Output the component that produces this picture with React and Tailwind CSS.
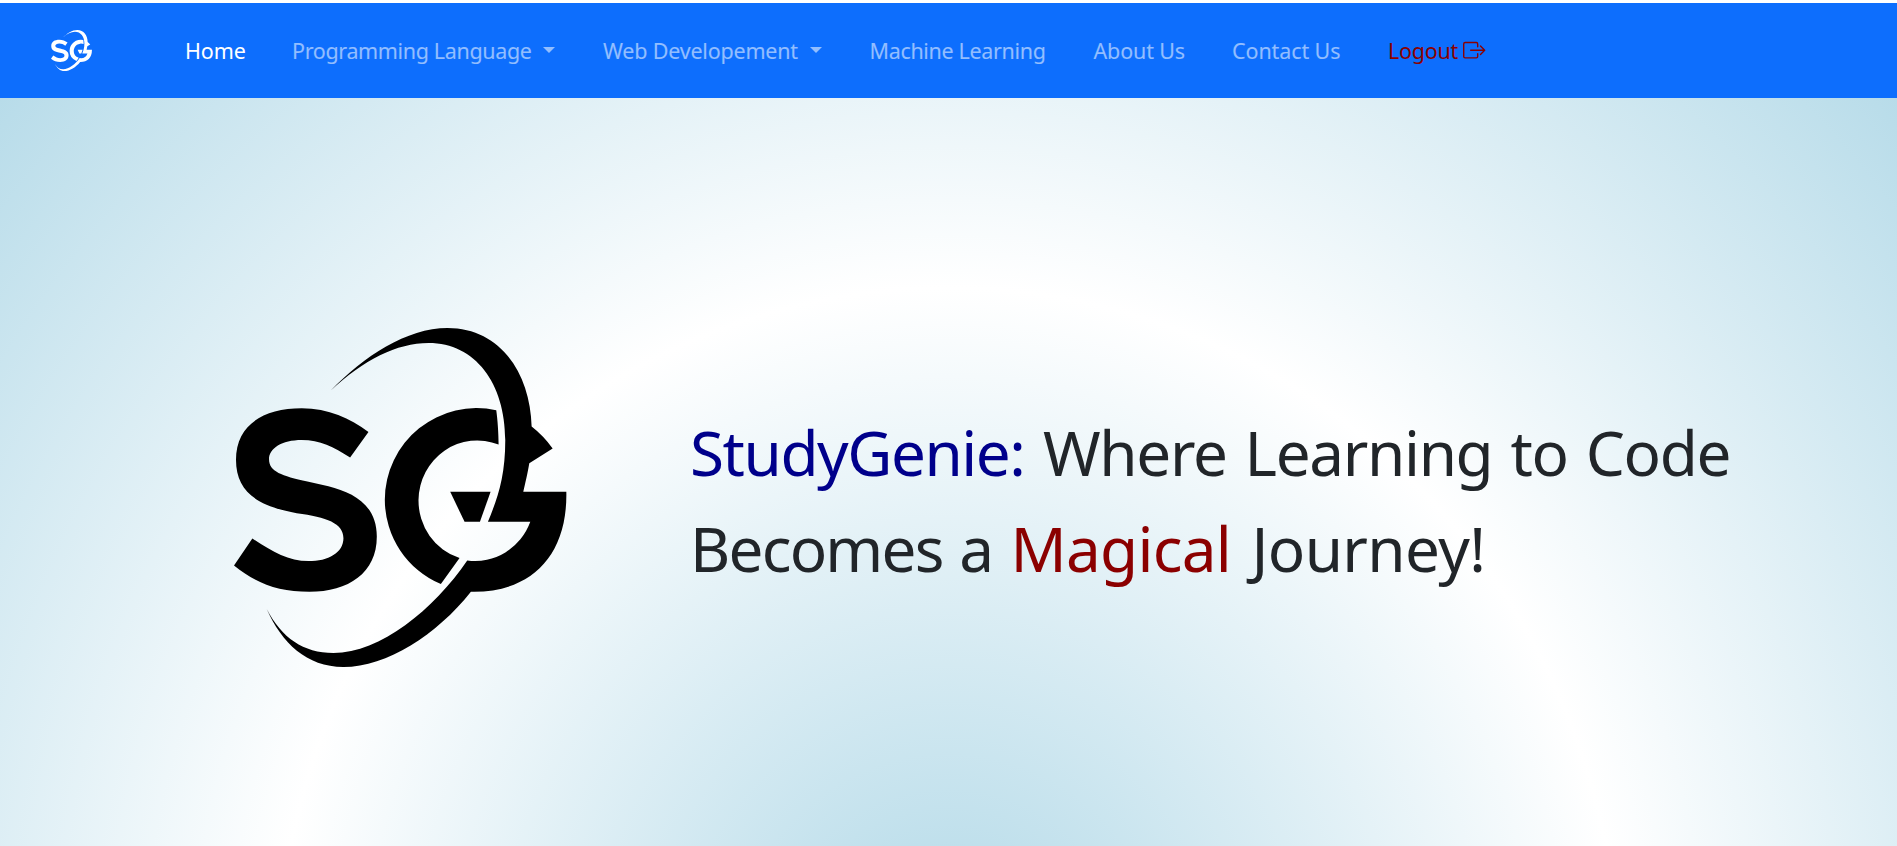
import { BsBoxArrowRight } from "react-icons/bs";

function Logo({ className }) {
  return (
    <svg viewBox="42 54 998 1018" preserveAspectRatio="none" className={className} fill="currentColor" role="img" aria-label="StudyGenie">
      <path d="M445 366C390 325 325 295 245 295C130 295 48 345 48 450C48 545 110 588 230 610C320 622 370 640 370 685C370 728 325 754 265 754C205 754 155 725 97 686L42 767C110 822 175 846 268 846C385 846 470 790 470 680C470 585 400 548 325 529L262 515C185 498 147 485 147 448C147 415 185 390 245 390C300 390 340 410 390 443Z" />
      <path d="M828 301A275 275.5 0 0 0 494 570A275 275.5 0 0 0 662 823L718 745A176 181 0 0 1 595 570A176 181 0 0 1 835 404C835 370 832 330 828 301Z" />
      <path d="M690 546H811L779 636H733Z" />
      <path d="M332 242C430 140 560 54 682 54C840 54 930 190 934 350Q970 378 997 416L927 460C921 495 915 520 909 546H1038C1042 745 925 850 752 846C650 975 500 1072 370 1072C260 1072 185 1000 140 898C185 985 250 1030 340 1030C480 1030 640 900 741 752A176 181 0 0 0 930 636H803C832 565 855 500 855 390C855 220 765 99 625 99C530 99 430 150 332 242Z" />
    </svg>
  );
}

function Caret() {
  return <span className="mb-[2px] ml-auto h-0 w-0 border-x-[6px] border-t-[6px] border-x-transparent border-t-current" />;
}

const links = [
  { label: "Home", box: "w-[107px] tracking-[-0.1px] text-white" },
  { label: "Programming Language", box: "w-[311px] pr-[48px] tracking-[-0.35px]", menu: true },
  { label: "Web Developement", box: "w-[266.5px] pr-[47.5px] tracking-[-0.2px]", menu: true },
  { label: "Machine Learning", box: "w-[224px] tracking-[-0.33px]" },
  { label: "About Us", box: "w-[138.5px] tracking-[-0.15px]" },
  { label: "Contact Us", box: "w-[156px] tracking-[-0.1px]" },
];

export default function App() {
  return (
    <div className="flex h-[846px] flex-col overflow-hidden bg-white pt-[3px] font-['Noto_Sans',sans-serif]">
      <nav className="flex h-[95px] shrink-0 items-center bg-[#0d6efd] pl-[51px] text-[21.5px] leading-[34px] whitespace-nowrap">
        <a href="#" className="mr-[93px] text-white">
          <Logo className="h-[41px] w-[41px]" />
        </a>
        <ul className="flex items-center text-white/55">
          {links.map(({ label, box, menu }) => (
            <li key={label} className={box}>
              <a href="#" className="flex items-center">
                {label}
                {menu && <Caret />}
              </a>
            </li>
          ))}
          <li>
            <a href="#" className="flex items-center tracking-[-0.24px] text-[#8b0000]">
              Logout
              <BsBoxArrowRight className="mb-px ml-[5px] h-[22.4px] w-[22.4px]" />
            </a>
          </li>
        </ul>
      </nav>
      <main className="flex grow items-start bg-[radial-gradient(1341px_1390px_at_948.5px_885px,#b0d8e7,#ffffff_50%,#b0d8e7)] pl-[234px]">
        <Logo className="mt-[230px] h-[339px] w-[333px] shrink-0 text-black" />
        <h1 className="mt-[306px] ml-[123px] text-[62px] leading-[96px] font-normal whitespace-nowrap text-[#212529]">
          <span className="flex">
            <span className="w-[353px] tracking-[-1.45px] text-[#00008b]">StudyGenie: </span>
            <span className="tracking-[-1.35px] [word-spacing:3.3px]">Where Learning to Code</span>
          </span>
          <span className="flex">
            <span className="w-[320.4px] tracking-[-1.8px] [word-spacing:2.4px]">Becomes a </span>
            <span className="w-[241px] tracking-[-0.7px] text-[#8b0000]">Magical </span>
            <span className="tracking-[-0.6px]">Journey!</span>
          </span>
        </h1>
      </main>
    </div>
  );
}
